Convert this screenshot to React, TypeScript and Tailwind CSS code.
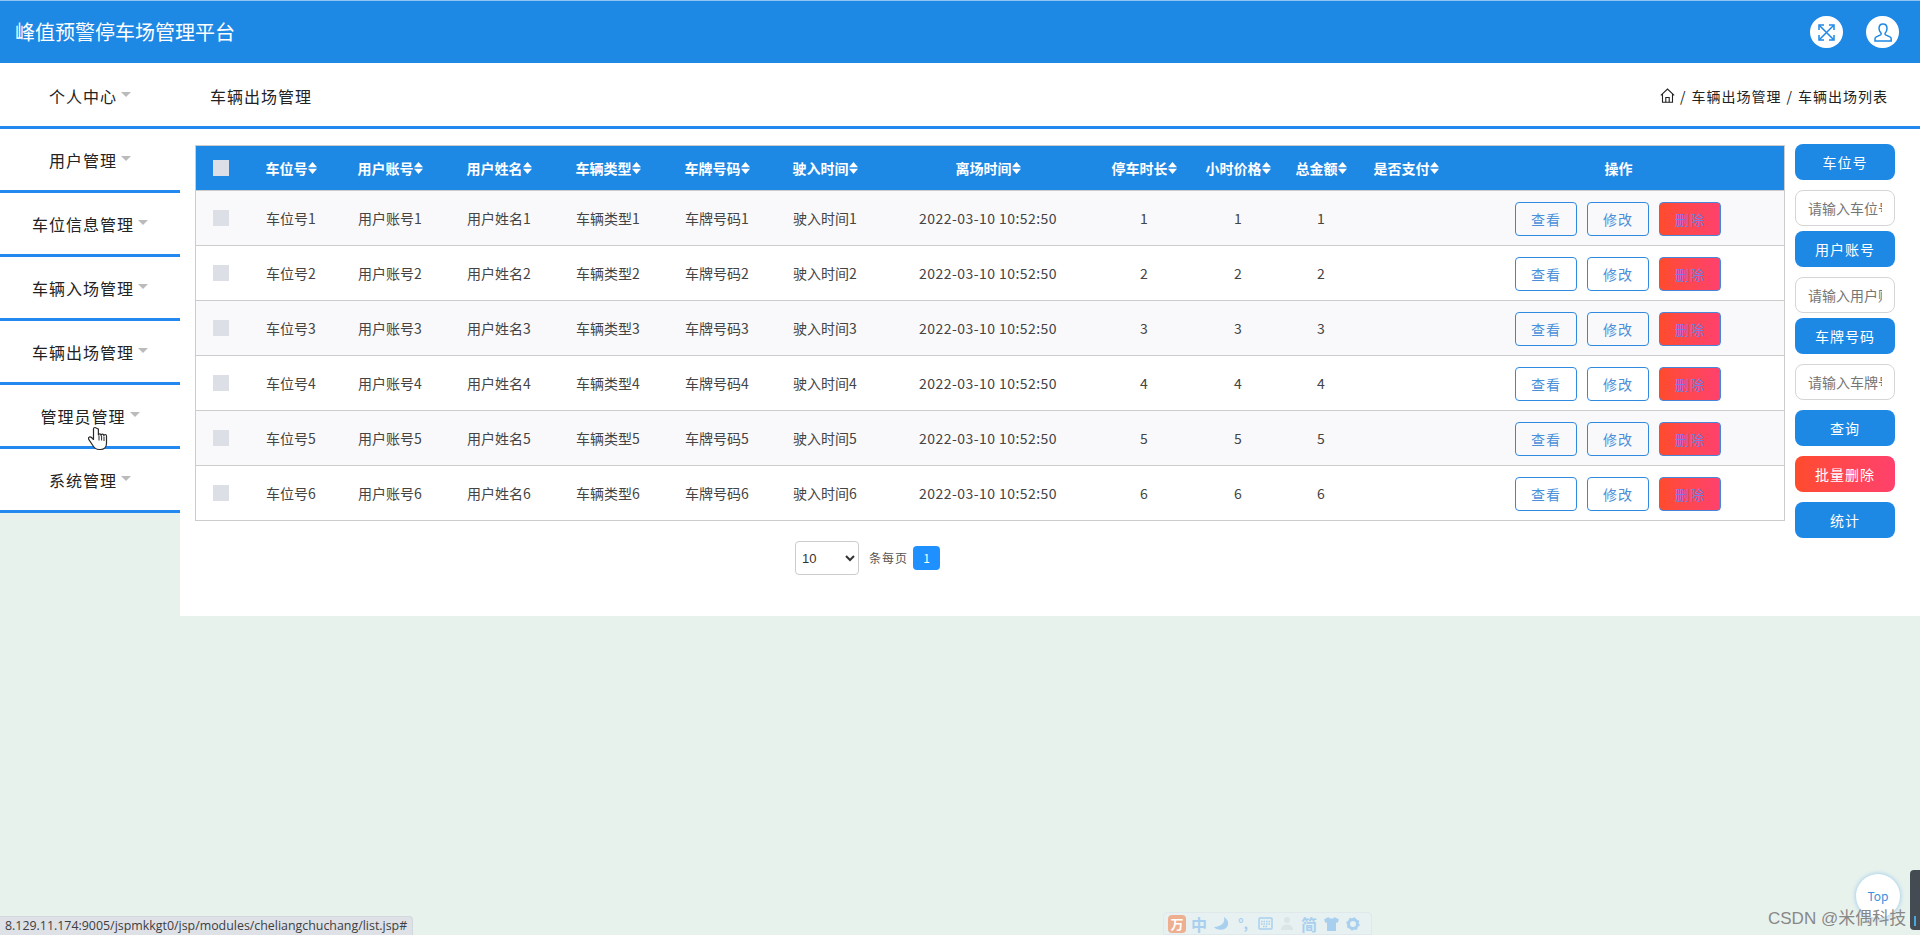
import React from "react";

const rows = [1, 2, 3, 4, 5, 6];
const sideMenu = ["个人中心", "用户管理", "车位信息管理", "车辆入场管理", "车辆出场管理", "管理员管理", "系统管理"];
const columns = ["车位号", "用户账号", "用户姓名", "车辆类型", "车牌号码", "驶入时间", "离场时间", "停车时长", "小时价格", "总金额", "是否支付"];

function SortIcon() {
  return (
    <svg width="9" height="12" viewBox="0 0 9 12" className="shrink-0" fill="#fff">
      <polygon points="4.500,0 9,5.300 0,5.300" />
      <polygon points="4.500,12 9,6.700 0,6.700" />
    </svg>
  );
}

function Caret() {
  return <span className="mb-[3px] h-0 w-0 border-x-[5px] border-t-[5px] border-x-transparent border-t-[#bbbbbb]" />;
}

function ExpandGlyph() {
  return (
    <svg width="17" height="17" viewBox="0 0 17 17" fill="none" stroke="#1e88e5" strokeWidth="1.5">
      <path d="M1 6V1h5M11 1h5v5M16 11v5h-5M6 16H1v-5" />
      <path d="M1.5 1.5l14 14M15.5 1.5l-14 14" />
    </svg>
  );
}

function UserGlyph() {
  return (
    <svg width="18" height="19" viewBox="0 0 18 19" fill="none" stroke="#1e88e5" strokeWidth="1.5">
      <path d="M9 1c2.600 0 4 2 4 4.600 0 1.900-.8 3.300-1.700 4.300-.5.6-.4 1.600.3 2l4.300 2c.9.4 1.300 1 1.300 2v2H1v-2c0-1 .4-1.600 1.300-2l4.300-2c.7-.4.8-1.400.3-2C6 8.900 5 7.500 5 5.600 5 3 6.400 1 9 1z" />
    </svg>
  );
}

function HomeGlyph() {
  return (
    <svg width="15" height="15" viewBox="0 0 15 15" fill="none" stroke="#222" strokeWidth="1.1">
      <path d="M.8 7.300 7.500 1l6.700 6.300M2.500 6v8.300h10V6" />
      <path d="M5.800 14.300V9.500h3.400v4.800" />
    </svg>
  );
}

function HandCursor() {
  return (
    <svg width="20" height="25" viewBox="0 0 20 25" className="absolute left-[88px] top-[426px]">
      <path
        d="M7 1.500c-.9 0-1.500.7-1.500 1.600v10.400l-2-2c-.8-.8-2-.8-2.600 0-.5.600-.5 1.500 0 2.200l4.300 6.300c1.300 2 3 3.500 5.800 3.500h1.500c3.500 0 6-2.500 6-6v-7.500c0-1-.6-1.500-1.300-1.500-.7 0-1.300.5-1.300 1.500 0-1.300-.6-1.900-1.400-1.900-.8 0-1.400.6-1.400 1.500 0-1.300-.6-1.800-1.400-1.800-.7 0-1.200.4-1.300 1V3.100C8.500 2.200 7.900 1.500 7 1.500z"
        fill="#fff"
        stroke="#2a2a2a"
        strokeWidth="1.200"
        strokeLinejoin="round"
      />
      <path d="M11 9.500v5M13.600 10v4.500M16 11v4" stroke="#2a2a2a" strokeWidth="1" fill="none" />
    </svg>
  );
}

function ActionButton({ label, danger }: { label: string; danger?: boolean }) {
  return (
    <button
      className={
        danger
          ? "h-[34px] w-[62px] rounded border border-[#4a86d8] bg-gradient-to-r from-[#ff4b2b] to-[#ff416c] text-sm tracking-[1px] text-[#6f7fe6]"
          : "h-[34px] w-[62px] rounded border border-[#2f8ae0] text-sm tracking-[1px] text-[#4a90d9]"
      }
    >
      {label}
    </button>
  );
}

function SideButton({ label, danger, className }: { label: string; danger?: boolean; className?: string }) {
  return (
    <button
      className={
        "h-9 w-[100px] rounded-lg text-sm tracking-[1px] text-white " +
        (danger ? "bg-gradient-to-r from-[#ff4b2b] to-[#ff416c] " : "bg-[#1e88e5] ") +
        (className ?? "")
      }
    >
      {label}
    </button>
  );
}

function SideInput({ placeholder, className }: { placeholder: string; className?: string }) {
  return (
    <input
      readOnly
      placeholder={placeholder}
      className={
        "h-9 w-[100px] rounded-lg border border-[#d5d5d5] bg-white px-3 text-sm outline-none placeholder:text-[#757575] " +
        (className ?? "")
      }
    />
  );
}

export default function App() {
  return (
    <div className="relative h-[935px] w-[1920px] overflow-hidden bg-[#e8f2ed] font-['Noto_Sans_CJK_SC','Liberation_Sans',sans-serif]">
      <header className="flex h-[63px] items-center justify-between border-t border-t-[#8fc3f2] bg-[#1e88e5] pl-[15px] pr-[21px]">
        <h1 className="text-xl font-normal text-white">峰值预警停车场管理平台</h1>
        <div className="flex items-center gap-[23px]">
          <div className="flex h-8 w-[33px] items-center justify-center rounded-full bg-white">
            <ExpandGlyph />
          </div>
          <div className="flex h-8 w-[33px] items-center justify-center rounded-full bg-white">
            <UserGlyph />
          </div>
        </div>
      </header>

      <div className="flex items-start">
        <nav className="w-[180px] bg-white">
          {sideMenu.map((item, i) => (
            <div
              key={item}
              className={
                (i === 0 ? "h-[66px] pt-[2px] " : "h-16 pt-px ") +
                "flex items-center justify-center gap-1 border-b-[3px] border-b-[#2389ef] text-base tracking-[1px] text-[#222222]"
              }
            >
              <span>{item}</span>
              <Caret />
            </div>
          ))}
        </nav>

        <main className="h-[553px] flex-1 bg-white">
          <div className="flex h-[66px] items-center justify-between border-b-[3px] border-b-[#2389ef] pl-[30px] pr-8 pt-[2px]">
            <span className="text-base tracking-[1px] text-[#222222]">车辆出场管理</span>
            <div className="flex items-center gap-[5px] text-sm tracking-[1px] text-[#222222]">
              <HomeGlyph />
              <span>/</span>
              <span>车辆出场管理</span>
              <span>/</span>
              <span>车辆出场列表</span>
            </div>
          </div>

          <div className="flex items-start gap-[10px] pl-[15px] pt-[15px]">
            <div className="mt-px w-[1590px]">
              <div className="border-x border-t border-[#cccccc]">
                <table className="w-[1588px] table-fixed border-separate border-spacing-0 text-sm text-[#444444]">
                  <colgroup>
                    <col className="w-[49px]" />
                    <col className="w-[92px]" />
                    <col className="w-[106px]" />
                    <col className="w-[112px]" />
                    <col className="w-[106px]" />
                    <col className="w-[112px]" />
                    <col className="w-[104px]" />
                    <col className="w-[222px]" />
                    <col className="w-[90px]" />
                    <col className="w-[98px]" />
                    <col className="w-[68px]" />
                    <col className="w-[102px]" />
                    <col className="w-[327px]" />
                  </colgroup>
                  <thead>
                    <tr className="bg-[#1e88e5] text-white">
                      <th className="h-[45px] border-b border-b-[#cccccc] p-0">
                        <span className="ml-[17px] block h-4 w-4 bg-[#dcdfe6]" />
                      </th>
                      {columns.map((c) => (
                        <th key={c} className="h-[45px] border-b border-b-[#cccccc] p-0 font-bold">
                          <span className="flex items-center justify-center">
                            {c}
                            <SortIcon />
                          </span>
                        </th>
                      ))}
                      <th className="h-[45px] border-b border-b-[#cccccc] p-0 pr-1 font-bold">操作</th>
                    </tr>
                  </thead>
                  <tbody>
                    {rows.map((n) => (
                      <tr key={n} className={n % 2 === 1 ? "bg-[#f9f9fb]" : "bg-white"}>
                        <td className="h-[55px] border-b border-b-[#cccccc] p-0">
                          <span className="ml-[17px] block h-4 w-4 bg-[#dcdfe6]" />
                        </td>
                        <td className="h-[55px] border-b border-b-[#cccccc] p-0 text-center">车位号{n}</td>
                        <td className="h-[55px] border-b border-b-[#cccccc] p-0 text-center">用户账号{n}</td>
                        <td className="h-[55px] border-b border-b-[#cccccc] p-0 text-center">用户姓名{n}</td>
                        <td className="h-[55px] border-b border-b-[#cccccc] p-0 text-center">车辆类型{n}</td>
                        <td className="h-[55px] border-b border-b-[#cccccc] p-0 text-center">车牌号码{n}</td>
                        <td className="h-[55px] border-b border-b-[#cccccc] p-0 text-center">驶入时间{n}</td>
                        <td className="h-[55px] border-b border-b-[#cccccc] p-0 text-center tracking-[0.45px]">2022-03-10 10:52:50</td>
                        <td className="h-[55px] border-b border-b-[#cccccc] p-0 text-center">{n}</td>
                        <td className="h-[55px] border-b border-b-[#cccccc] p-0 text-center">{n}</td>
                        <td className="h-[55px] border-b border-b-[#cccccc] p-0 text-center">{n}</td>
                        <td className="h-[55px] border-b border-b-[#cccccc] p-0" />
                        <td className="h-[55px] border-b border-b-[#cccccc] p-0 pr-[5px]">
                          <div className="flex translate-y-px justify-center gap-[10px]">
                            <ActionButton label="查看" />
                            <ActionButton label="修改" />
                            <ActionButton label="删除" danger />
                          </div>
                        </td>
                      </tr>
                    ))}
                  </tbody>
                </table>
              </div>

              <div className="ml-[600px] mt-5 flex items-center">
                <select className="h-[34px] w-16 rounded border border-[#cccccc] bg-white pl-0.5 font-['Liberation_Sans',sans-serif] text-[13px] text-[#333333]">
                  <option>10</option>
                </select>
                <span className="ml-[10px] text-xs tracking-[1px] text-[#555555]">条每页</span>
                <span className="ml-[5px] flex h-6 w-[27px] items-center justify-center rounded bg-[#1e90ff] text-xs text-white">
                  1
                </span>
              </div>
            </div>

            <div className="flex w-[100px] flex-col">
              <SideButton label="车位号" />
              <SideInput placeholder="请输入车位号" className="mt-[10px]" />
              <SideButton label="用户账号" className="mt-[5px]" />
              <SideInput placeholder="请输入用户账号" className="mt-[10px]" />
              <SideButton label="车牌号码" className="mt-[5px]" />
              <SideInput placeholder="请输入车牌号码" className="mt-[10px]" />
              <SideButton label="查询" className="mt-[10px]" />
              <SideButton label="批量删除" danger className="mt-[10px]" />
              <SideButton label="统计" className="mt-[10px]" />
            </div>
          </div>
        </main>
      </div>

      <HandCursor />

      <div className="absolute bottom-0 left-0 flex h-[19px] w-[413px] items-center rounded-tr border-r border-t border-[#d4d7db] bg-[#dee1e6] pl-[5px] font-['Open_Sans',sans-serif] text-[12.4px] text-[#3c4043]">
        8.129.11.174:9005/jspmkkgt0/jsp/modules/cheliangchuchang/list.jsp#
      </div>

      <div className="absolute bottom-0 left-[1163px] flex h-[23px] w-[209px] items-center rounded-t border border-[#dfe8ea] bg-[#e7f1f1] pl-0.5 text-[16px] font-bold text-[#a8d0ee]">
        <span className="flex w-[22px] justify-center">
          <span className="flex h-[18px] w-[18px] items-center justify-center rounded-sm bg-[#eeaf90] text-[13px] text-white">万</span>
        </span>
        <span className="flex w-[22px] justify-center">中</span>
        <span className="flex w-[22px] justify-center">
          <svg width="14" height="14" viewBox="0 0 14 14" fill="#a8d0ee">
            <path d="M10 0c1 5-1 9-10 10 3 4 12 4 14-2 1-3-1-6-4-8z" />
          </svg>
        </span>
        <span className="flex w-[22px] justify-center text-[14px]">°,</span>
        <span className="flex w-[22px] justify-center">
          <svg width="15" height="13" viewBox="0 0 15 13" fill="none" stroke="#a8d0ee" strokeWidth="1.500">
            <rect x="1" y="1" width="13" height="11" rx="1" />
            <path d="M3 4.500h9M3 7h9M5 9.500h5" strokeDasharray="1.500 1" />
          </svg>
        </span>
        <span className="flex w-[22px] justify-center">
          <svg width="12" height="13" viewBox="0 0 12 13" fill="#dbe5e6">
            <circle cx="6" cy="3" r="3" />
            <path d="M0 13c0-4 3-5.500 6-5.500s6 1.500 6 5.500z" />
          </svg>
        </span>
        <span className="flex w-[22px] justify-center">简</span>
        <span className="flex w-[22px] justify-center">
          <svg width="15" height="14" viewBox="0 0 15 14" fill="#a8d0ee">
            <path d="M4.500 0 0 2.500l1.500 3.500 1.500-.5V14h9V5.500l1.500.5L15 2.500 10.500 0c-.5 2-5.500 2-6 0z" />
          </svg>
        </span>
        <span className="flex w-[22px] justify-center">
          <svg width="14" height="14" viewBox="0 0 14 14" fill="none" stroke="#a8d0ee" strokeWidth="3">
            <circle cx="7" cy="7" r="4.500" />
            <circle cx="7" cy="7" r="6" strokeWidth="1.500" strokeDasharray="2 2.700" />
          </svg>
        </span>
      </div>

      <div className="absolute left-[1856px] top-[874px] flex h-11 w-11 items-center justify-center rounded-full bg-white text-xs text-[#3d8fdc] shadow-[0_0_5px_#8fc3e8]">
        Top
      </div>
      <div className="absolute left-[1768px] top-[906px] font-['Liberation_Sans','Noto_Sans_CJK_SC',sans-serif] text-[17px] text-[#888888]">
        CSDN @米偶科技
      </div>
      <div className="absolute left-[1910px] top-[870px] flex h-[60px] w-[10px] items-end justify-center rounded-l bg-[#454b52] pb-1">
        <span className="h-[10px] w-[2px] bg-[#4aa8e0]" />
      </div>
    </div>
  );
}
